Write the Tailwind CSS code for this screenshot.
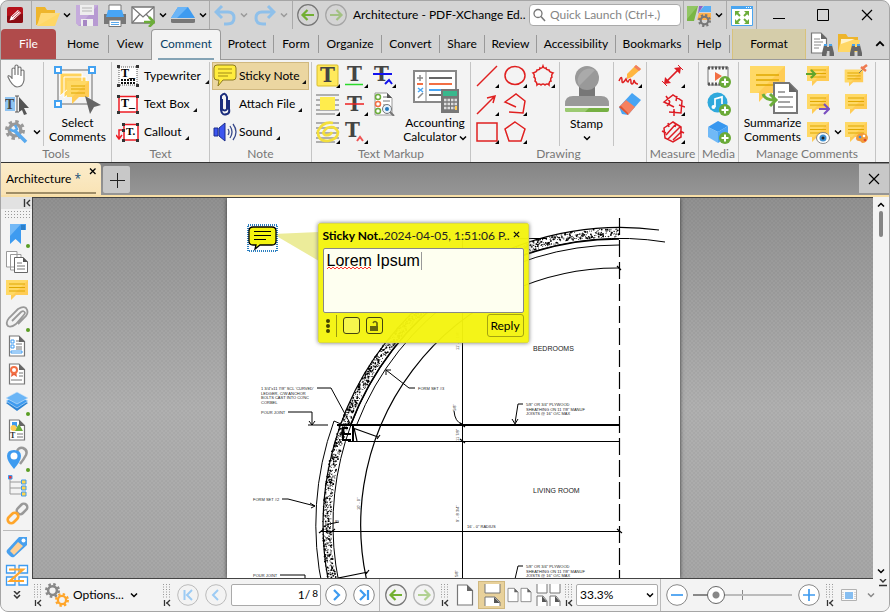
<!DOCTYPE html>
<html lang="en">
<head>
  <meta charset="UTF-8">
  <meta name="viewport" content="width=device-width, initial-scale=1.0">
  <title>Architecture - PDF-XChange Editor</title>
  <script src="https://cdn.jsdelivr.net/npm/@tailwindcss/browser@4"></script>
</head>
<body class="bg-white font-['Lato','Open_Sans',sans-serif] text-xs text-black">

<!-- shared icons -->
<svg class="hidden">
  <symbol id="chev" viewBox="0 0 8 8"><path d="M1 2.500 4 5.500 7 2.500" fill="none" stroke="currentColor" stroke-width="1.500"/></symbol>
  <symbol id="corner" viewBox="0 0 4 4"><path d="M4 0V4H0Z" fill="#111"/></symbol>
  <symbol id="note" viewBox="0 0 24 24"><path d="M1 2H23V17H11L6 22V17H1Z" fill="#fc5"/><path d="M1 2H23L8 17H1Z" fill="#ffd966"/><path d="M4 6H20M4 9.500H20M4 13H20" stroke="#e0a800" stroke-width="1.200"/></symbol>
  <symbol id="page" viewBox="0 0 18 22"><path d="M1.500 1H11L16.500 6.500V21H1.500Z" fill="#fff" stroke="#777" stroke-width="1.200"/><path d="M11 1V7H17Z" fill="#666"/></symbol>
  <symbol id="plus" viewBox="0 0 12 12"><circle cx="6" cy="6" r="6" fill="#6aaa38"/><path d="M6 2.500V9.500M2.500 6H9.500" stroke="#fff" stroke-width="2"/></symbol>
  <symbol id="gear" viewBox="0 0 24 24"><circle cx="12" cy="12" r="7" fill="none" stroke="currentColor" stroke-width="4"/><circle cx="12" cy="12" r="10" fill="none" stroke="currentColor" stroke-width="4" stroke-dasharray="4 3.850"/></symbol>
  <symbol id="grip" viewBox="0 0 9 24"><path d="M.5 1V15M3.500 1V15M6.500 1V15" stroke="#999" stroke-dasharray="1 1.500"/><path d="M1.500 17V23M7 17 4 20 7 23M4 20H3" fill="none" stroke="#333" stroke-width="1.300"/></symbol>
  <symbol id="binoc" viewBox="0 0 12 12"><path d="M2 1H5V3H7V1H10L12 9V12H7.500V7H4.500V12H0V9Z" fill="#666"/><path d="M2 0H5V2H2ZM7 0H10V2H7Z" fill="#4aa3ea"/></symbol>
  <symbol id="arrow" viewBox="0 0 22 22"><circle cx="11" cy="11" r="10.300" fill="none" stroke="#777" stroke-width="1.200"/><path d="M17 11H6M10.500 6 5.500 11 10.500 16" fill="none" stroke="#72b032" stroke-width="2.200"/></symbol>
  <symbol id="poly" viewBox="0 0 24 24"><path d="M12 2 22 9 18 21H6L2 9Z" fill="none" stroke="currentColor" stroke-width="1.500"/></symbol>
</svg>

<div class="flex h-screen min-h-[560px] flex-col overflow-hidden rounded-lg border border-[#a5a5a5] bg-[#d4d4d4]">

  <!-- title bar -->
  <header class="flex h-7 shrink-0 items-center">
    <div class="flex h-full w-[31px] shrink-0 items-center border-r border-[#aaa] pl-1.5">
      <svg class="size-4" viewBox="0 0 16 16"><rect width="16" height="16" rx="2" fill="#b5121b"/><path d="M0 9V14Q0 16 2 16H14Q16 16 16 14V7Z" fill="#8b0d14"/><path d="M2.500 13.500 4 9.500 11 3 14 6 7 12.500Z" fill="#fff"/><path d="M5 10 12 4M6.500 11.500 13 5.500" stroke="#b5121b" stroke-width=".8"/></svg>
    </div>
    <button class="ml-1 shrink-0" aria-label="Open"><svg class="size-6" viewBox="0 0 24 24"><path d="M0 4H9L11 7H19V12H7L1 22H0Z" fill="#eeb52c"/><path d="M5 10H24L19 23H1Z" fill="#ffd766"/><path d="M5 10H24L3 22 1 23Z" fill="#ffe08a" opacity=".5"/></svg></button>
    <button class="ml-[3px] shrink-0" aria-label="Open menu"><svg class="size-2"><use href="#chev"/></svg></button>
    <button class="ml-1 shrink-0" aria-label="Save"><svg class="size-6" viewBox="0 0 24 24"><path d="M1 2H23V23H4L1 20Z" fill="#b79ad2"/><path d="M1 2H23L4 23 1 20Z" fill="#c5abdc"/><path d="M5 2H19V12H5Z" fill="#eee"/><path d="M7 5H17M7 8H17" stroke="#b5b5b5"/><path d="M6 16H18V23H6Z" fill="#eee"/><path d="M8 17H12V23H8Z" fill="#a687c4"/></svg></button>
    <button class="ml-1 shrink-0" aria-label="Print"><svg class="size-6" viewBox="0 0 24 24"><path d="M6 2H18V10H6Z" fill="#fff" stroke="#777"/><path d="M1 11H23V21H1Z" fill="#777"/><path d="M5 7H19L21 14H3Z" fill="#48a5f4"/><path d="M6 17H18V23.500H6Z" fill="#fff" stroke="#777"/><path d="M8 19.500H16M8 21.500H16" stroke="#5aa9ec"/></svg></button>
    <button class="ml-1 shrink-0" aria-label="Email"><svg class="size-6" viewBox="0 0 24 24"><path d="M1 4H23V20H1Z" fill="#fff" stroke="#777" stroke-width="1.300"/><path d="M1 4 12 14 23 4M1 20 9 11M23 20 15 11" fill="none" stroke="#777" stroke-width="1.200"/><path d="M13 19H22M18 14 23 19 18 24" fill="none" stroke="#6cad3a" stroke-width="2.500"/></svg></button>
    <button class="ml-1 shrink-0" aria-label="Email menu"><svg class="size-2"><use href="#chev"/></svg></button>
    <button class="ml-1 shrink-0" aria-label="Scan"><svg class="size-6" viewBox="0 0 24 24"><path d="M7 4H17L24 15H0Z" fill="#3e9bf0"/><path d="M7 4H17L6 15H0Z" fill="#6bb5f7"/><path d="M0 16H24V19Q24 20 22 20H2Q0 20 0 19Z" fill="#777"/></svg></button>
    <button class="ml-1 shrink-0" aria-label="Scan menu"><svg class="size-2"><use href="#chev"/></svg></button>
    <div class="ml-0.5 h-full w-px shrink-0 bg-[#aaa]"></div>
    <button class="ml-1 shrink-0" aria-label="Undo"><svg class="size-6" viewBox="0 0 24 24"><path d="M2 9H14Q20 9 20 15 20 21 13 21H10M8 3 2 9 8 15" fill="none" stroke="#8fc0ea" stroke-width="3"/></svg></button>
    <button class="ml-0.5 shrink-0 text-[#999]" aria-label="Undo menu"><svg class="size-2"><use href="#chev"/></svg></button>
    <button class="ml-1 shrink-0" aria-label="Redo"><svg class="size-6" viewBox="0 0 24 24"><path d="M22 9H10Q4 9 4 15 4 21 11 21H14M16 3 22 9 16 15" fill="none" stroke="#8fc0ea" stroke-width="3"/></svg></button>
    <button class="ml-1 shrink-0 text-[#999]" aria-label="Redo menu"><svg class="size-2"><use href="#chev"/></svg></button>
    <div class="ml-1 h-full w-px shrink-0 bg-[#aaa]"></div>
    <button class="ml-1 shrink-0" aria-label="Back"><svg class="size-[22px]"><use href="#arrow"/></svg></button>
    <button class="ml-1.5 shrink-0 rotate-180 opacity-50" aria-label="Forward"><svg class="size-[22px]"><use href="#arrow"/></svg></button>
    <h1 class="ml-1.5 min-w-0 flex-1 whitespace-nowrap">Architecture - PDF-XChange Ed..</h1>
    <label class="flex h-[22px] w-[152px] shrink-0 items-center gap-1 rounded-sm border border-[#aaa] bg-white px-0.5">
      <svg class="size-3.5 shrink-0" viewBox="0 0 14 14"><circle cx="6" cy="5.500" r="4" fill="none" stroke="#777" stroke-width="1.300"/><path d="M9 8.500 13 13" stroke="#777" stroke-width="1.500"/></svg>
      <input class="w-full min-w-0 placeholder:text-[#858585] focus:outline-none" placeholder="Quick Launch (Ctrl+.)" aria-label="Quick Launch">
    </label>
    <div class="ml-0.5 h-full w-px shrink-0 bg-[#aaa]"></div>
    <button class="ml-[3px] shrink-0" aria-label="UI options"><svg class="size-6" viewBox="0 0 24 24"><path d="M0 3H11L7 18H0Z" fill="#79b644"/><path d="M0 3H11L0 16Z" fill="#92c664"/><path d="M12 3H16L11 11Z" fill="#8d63c9"/><path d="M17 3H24V9H12Z" fill="#58aef5"/><path d="M12 10H24V17H10Z" fill="#ffb14d"/><use href="#gear" x="11" y="11" width="13" height="13" color="#777"/></svg></button>
    <button class="ml-1 shrink-0" aria-label="UI options menu"><svg class="size-2"><use href="#chev"/></svg></button>
    <div class="ml-[3px] h-full w-px shrink-0 bg-[#aaa]"></div>
    <button class="ml-[3px] shrink-0" aria-label="Full screen"><svg class="size-6" viewBox="0 0 24 24"><path d="M1.500 3.500H22.500V22.500H1.500Z" fill="#fff" stroke="#4aa5f0"/><path d="M1 3H23V6H1Z" fill="#4aa5f0"/><path d="M16 4.500H22" stroke="#fff" stroke-dasharray="1 1"/><path d="M5 8H10L5 13ZM19 8H14L19 13ZM5 21H10L5 16ZM19 21H14L19 16Z" fill="#6cad3a"/><path d="M6 9 10 13M18 9 14 13M6 20 10 16M18 20 14 16" stroke="#6cad3a" stroke-width="2"/></svg></button>
    <div class="ml-0.5 h-full w-px shrink-0 bg-[#aaa]"></div>
    <button class="flex w-11 shrink-0 justify-center" aria-label="Minimize"><svg class="size-3" viewBox="0 0 12 12"><path d="M0 9.500H12" stroke="#000"/></svg></button>
    <button class="flex w-11 shrink-0 justify-center" aria-label="Maximize"><svg class="size-3" viewBox="0 0 12 12"><path d="M.5.5H11.500V11.500H.5Z" fill="none" stroke="#000"/></svg></button>
    <button class="flex w-11 shrink-0 justify-center" aria-label="Close"><svg class="size-3" viewBox="0 0 12 12"><path d="M1 1 11 11M11 1 1 11" stroke="#000" stroke-width="1.200"/></svg></button>
  </header>

  <!-- ribbon tabs -->
  <nav class="flex h-[31px] shrink-0 items-stretch border-b border-[#9a9a9a]">
    <a href="#" class="flex w-[55px] items-center justify-center rounded-t bg-[#b04b4b] text-white">File</a>
    <a href="#" class="my-1.5 ml-0.5 flex w-[51px] items-center justify-center border-r border-[#999]">Home</a>
    <a href="#" class="flex w-[42px] items-center justify-center">View</a>
    <a href="#" class="-mb-px flex w-[70px] flex-col items-center justify-end rounded-t border border-b-0 border-[#999] bg-[#f3f3f3] text-[#0b3f66]"><span class="flex flex-1 items-center">Comment</span><span class="h-0.5 w-14 bg-[#84a3b5]"></span></a>
    <a href="#" class="my-1.5 flex w-[53px] items-center justify-center border-r border-[#999]">Protect</a>
    <a href="#" class="my-1.5 flex w-[45px] items-center justify-center border-r border-[#999]">Form</a>
    <a href="#" class="my-1.5 flex w-[63px] items-center justify-center border-r border-[#999]">Organize</a>
    <a href="#" class="my-1.5 flex w-[58px] items-center justify-center border-r border-[#999]">Convert</a>
    <a href="#" class="my-1.5 flex w-[45px] items-center justify-center border-r border-[#999]">Share</a>
    <a href="#" class="my-1.5 flex w-[52px] items-center justify-center border-r border-[#999]">Review</a>
    <a href="#" class="my-1.5 flex w-[79px] items-center justify-center border-r border-[#999]">Accessibility</a>
    <a href="#" class="my-1.5 flex w-[73px] items-center justify-center border-r border-[#999]">Bookmarks</a>
    <a href="#" class="my-1.5 flex w-[41px] items-center justify-center border-r border-[#999]">Help</a>
    <a href="#" class="ml-0.5 flex w-[74px] items-center justify-center border-x border-[#d8c27c] bg-[#d5cdaa]">Format</a>
    <div class="ml-1 flex flex-1 items-center gap-1">
      <button aria-label="Find"><svg class="size-6" viewBox="0 0 24 24"><use href="#page" width="18" height="22"/><path d="M4 7H10M4 10H13M4 13H11M4 16H9" stroke="#888"/><use href="#binoc" x="12" y="12" width="12" height="12"/></svg></button>
      <button aria-label="Search"><svg class="size-6" viewBox="0 0 24 24"><path d="M0 2H8L10 5H20V10L2 20H0Z" fill="#eeb52c"/><path d="M3 8H22L19 20H0Z" fill="#ffd766"/><path d="M3 7H17L3 12Z" fill="#fff3cc"/><use href="#binoc" x="12" y="12" width="12" height="12"/></svg></button>
      <button class="mr-1 ml-auto rotate-180" aria-label="Collapse ribbon"><svg class="size-2.5"><use href="#chev"/></svg></button>
    </div>
  </nav>

  <!-- ribbon -->
  <div class="flex h-[102px] shrink-0 bg-[#f3f3f3] pt-0.5 whitespace-nowrap [&>section]:flex [&>section]:shrink-0 [&>section]:flex-col [&>section]:border-r [&>section]:border-[#c4c4c4] [&>section>h2]:h-4 [&>section>h2]:text-center [&>section>h2]:leading-4 [&>section>h2]:text-[#777] [&>section>div]:flex [&>section>div]:h-[84px]">
    <section class="w-[111px]">
      <div>
        <div class="grid w-[43px] shrink-0 grid-rows-3 items-center border-r border-[#c4c4c4] pl-1">
          <button aria-label="Hand"><svg class="size-6" viewBox="0 0 24 24"><path d="M7 15V5Q8.500 3 10 5V2Q11.500 0 13 2V4Q15 2 16 4V7Q18 5 19 7V16Q18 23 12 23 7 22 3 13 3 10 7 14M10 5V11M13 4V11M16 6V12" fill="#fff" stroke="#777" stroke-width="1.200"/></svg></button>
          <button aria-label="Select text"><svg class="size-6" viewBox="0 0 24 24"><path d="M0 5H10V19H0Z" fill="#8fc4f2"/><text x="0" y="17" font-family="Liberation Serif" font-weight="bold" font-size="14" fill="#444">T</text><path d="M10 4H14M12 4V20M10 20H14" stroke="#555"/><path d="M14 5 24 16 19 16 22 22 19 23 17 18 14 20Z" fill="#555"/></svg></button>
          <div class="flex items-center gap-1"><button class="shrink-0" aria-label="Other tools"><svg class="size-6" viewBox="0 0 24 24"><use href="#gear" width="20" height="20" color="#999"/><path d="M9 10 21 22" stroke="#58a9ee" stroke-width="3.500"/><path d="M5 9Q9 13 12 9L10 5" fill="none" stroke="#58a9ee" stroke-width="2.500"/></svg></button><svg class="size-2 shrink-0"><use href="#chev"/></svg></div>
        </div>
        <button class="flex flex-1 flex-col items-center leading-[14px]">
          <svg class="mt-0.5 size-[52px] shrink-0" viewBox="0 0 52 52"><path d="M6 6H40V40H6Z" fill="none" stroke="#999" stroke-width="1.500"/><path d="M8 9H30V25H16L8 32ZM12 13H34V29H18L12 34Z" fill="#ffd35c" stroke="#fff"/><path d="M15 17H37V33H27L20 40V33H15Z" fill="#fc5"/><path d="M15 17H37L20 33H15Z" fill="#ffd966"/><path d="M19 22H33M19 25H33M19 29H33" stroke="#e0a800" stroke-width="1.200"/><path d="M3 3H9V9H3ZM37 3H43V9H37ZM3 37H9V43H3Z" fill="#fff" stroke="#43a2f1" stroke-width="2"/><path d="M33 32 49 41 42 43 38 50Z" fill="#666"/></svg>
          <span>Select<br>Comments</span>
        </button>
      </div>
      <h2>Tools</h2>
    </section>

    <section class="w-[98px]">
      <div class="flex-col pl-1">
        <button class="flex h-7 w-[88px] items-center gap-1 text-left"><svg class="size-6 shrink-0" viewBox="0 0 24 24"><path d="M3 3H21V21H3Z" fill="#fff" stroke="#555" stroke-dasharray="1 1"/><text x="5" y="13" font-family="Liberation Serif" font-weight="bold" font-size="12">T_</text><path d="M5 16H19M5 19H19" stroke="#111" stroke-width="2" stroke-dasharray="2 1"/><path d="M1 1H4V4H1ZM20 1H23V4H20ZM1 20H4V23H1ZM20 20H23V23H20Z" fill="#333"/></svg><span class="flex-1">Typewriter</span><svg class="mt-3 size-1 shrink-0"><use href="#corner"/></svg></button>
        <button class="flex h-7 w-[78px] items-center gap-1 text-left"><svg class="size-6 shrink-0" viewBox="0 0 24 24"><path d="M3 4.500H21V20H3Z" fill="#fff" stroke="#ee1c24" stroke-width="1.500"/><text x="5" y="15" font-family="Liberation Serif" font-weight="bold" font-size="12">T_</text><path d="M1 3H4V6H1ZM20 3H23V6H20ZM1 19H4V22H1ZM20 19H23V22H20Z" fill="#333"/></svg><span class="flex-1">Text Box</span><svg class="mt-3 size-1 shrink-0"><use href="#corner"/></svg></button>
        <button class="flex h-7 w-[72px] items-center gap-1 text-left"><svg class="size-6 shrink-0" viewBox="0 0 24 24"><path d="M8 4.500H22V20H8Z" fill="#fff" stroke="#ee1c24" stroke-width="1.500"/><path d="M8 10H3V18M0 15 3 19 6 15" fill="none" stroke="#ee1c24" stroke-width="1.500"/><text x="10" y="15" font-family="Liberation Serif" font-weight="bold" font-size="11">T.</text><path d="M6 3H9V6H6ZM20 3H23V6H20ZM6 19H9V22H6ZM20 19H23V22H20ZM6 9H9V12H6Z" fill="#333"/></svg><span class="flex-1">Callout</span><svg class="mt-3 size-1 shrink-0"><use href="#corner"/></svg></button>
      </div>
      <h2>Text</h2>
    </section>

    <section class="w-[102px]">
      <div class="flex-col pl-0.5">
        <button class="flex h-7 w-[97px] items-center gap-0.5 border border-[#d0b87f] bg-[#ebd6a1] pr-0.5 text-left"><svg class="size-6 shrink-0" viewBox="0 0 24 24"><path d="M4 1H20Q23 1 23 4V13Q23 16 20 16H10L5 22 6 16H4Q1 16 1 13V4Q1 1 4 1Z" fill="#ffec3d" stroke="#8c7a20"/><path d="M5 5H19M5 9H19M5 12H15" stroke="#a18b19"/></svg><span class="flex-1">Sticky Note</span><svg class="mt-3 size-1 shrink-0"><use href="#corner"/></svg></button>
        <button class="flex h-7 w-[90px] items-center gap-0.5 pl-px text-left"><svg class="size-6 shrink-0" viewBox="0 0 24 24"><path d="M9 7V17Q12 20 14 17V5Q12-1 8 4V18Q9 24 14 22 17 21 16 17V8" fill="none" stroke="#1b2d7c" stroke-width="2"/></svg><span class="flex-1">Attach File</span><svg class="mt-3 size-1 shrink-0"><use href="#corner"/></svg></button>
        <button class="flex h-7 w-[68px] items-center gap-0.5 pl-px text-left"><svg class="size-6 shrink-0" viewBox="0 0 24 24"><path d="M1 8H5V16H1ZM6 8 12 3V21L6 16Z" fill="#3c55f0" stroke="#1b2d8c"/><path d="M15 9Q17 12 15 15M17 6Q21 12 17 18M20 4Q26 12 20 20" fill="none" stroke="#394a8c" stroke-width="1.300"/></svg><span class="flex-1">Sound</span><svg class="mt-3 size-1 shrink-0"><use href="#corner"/></svg></button>
      </div>
      <h2>Note</h2>
    </section>

    <section class="w-[159px]">
      <div class="pl-1">
        <div class="grid shrink-0 grid-cols-[28px_28px_28px] grid-rows-3 items-center" font-family="DejaVu Serif">
          <button aria-label="Highlight text"><svg class="size-6" viewBox="0 0 24 24"><rect x="1" y="1" width="21" height="21" rx="1" fill="#ffe95c" stroke="#d9bd2b"/><text x="4" y="18" font-family="DejaVu Serif" font-weight="bold" font-size="20" fill="#444">T</text><path d="M24 20V24H20Z"/></svg></button>
          <button aria-label="Underline text"><svg class="size-6" viewBox="0 0 24 24"><text x="3" y="17" font-family="DejaVu Serif" font-weight="bold" font-size="20" fill="#444">T</text><path d="M1 20.500H19" stroke="#2bd92b" stroke-width="1.500"/><path d="M24 20V24H20Z"/></svg></button>
          <button aria-label="Replace text"><svg class="size-6" viewBox="0 0 24 24"><text x="2" y="17" font-family="DejaVu Serif" font-weight="bold" font-size="20" fill="#444">T</text><path d="M1 10H20M13 20 17 16 20 20" fill="none" stroke="#1212ee" stroke-width="2"/><path d="M24 20V24H20Z"/></svg></button>
          <button aria-label="Highlight area"><svg class="size-6" viewBox="0 0 24 24"><path d="M0 3H23M0 8H23M0 13H23M0 18H23M0 22H19" stroke="#999" stroke-width="1.500"/><path d="M4 5H19V18H4Z" fill="#ffec4d"/><path d="M24 20V24H20Z"/></svg></button>
          <button aria-label="Strikeout text"><svg class="size-6" viewBox="0 0 24 24"><text x="3" y="19" font-family="DejaVu Serif" font-weight="bold" font-size="20" fill="#444">T</text><path d="M1 12H20" stroke="#e22" stroke-width="1.500"/><path d="M24 20V24H20Z"/></svg></button>
          <button aria-label="Find markups"><svg class="size-6" viewBox="0 0 24 24"><path d="M3 1H15L20 6V23H3Z" fill="#fff" stroke="#999"/><path d="M15 1V6H20Z" fill="#555"/><circle cx="6" cy="5" r="2.500" fill="none" stroke="#6cad3a" stroke-width="1.500"/><circle cx="6" cy="12" r="2.500" fill="none" stroke="#f26f44" stroke-width="1.500"/><circle cx="6" cy="19" r="2.500" fill="none" stroke="#6cad3a" stroke-width="1.500"/><path d="M11 5H15M11 9H18M11 13H14" stroke="#777"/><circle cx="15" cy="17" r="4.500" fill="#e7f3fd" stroke="#777"/><circle cx="15" cy="17" r="2" fill="#2779bb"/><path d="M18 20 22 24" stroke="#777" stroke-width="2"/></svg></button>
          <button aria-label="Freehand highlight"><svg class="size-6" viewBox="0 0 24 24"><path d="M0 3H23M0 8H23M0 13H23M0 18H23M0 22H19" stroke="#999" stroke-width="1.500"/><path d="M17 3Q7 1 2 11 1 21 12 21 22 19 22 12 19 5 11 8 5 13 9 15 14 16 16 12" fill="none" stroke="#f3df3c" stroke-width="2.700"/><path d="M24 20V24H20Z"/></svg></button>
          <button aria-label="Insert text"><svg class="size-6" viewBox="0 0 24 24"><text x="1" y="17" font-family="DejaVu Serif" font-weight="bold" font-size="20" fill="#444">T</text><path d="M13 21 16 17 19 21" fill="none" stroke="#ee5555" stroke-width="2"/><path d="M24 20V24H20Z"/></svg></button>
        </div>
        <button class="flex flex-1 flex-col items-center leading-[14px]">
          <svg class="mt-0.5 size-[52px] shrink-0" viewBox="0 0 52 52"><path d="M5 7H47V38H5Z" fill="#fff" stroke="#888" stroke-width="2"/><path d="M17 8V37" stroke="#888"/><path d="M20 14H43M20 31H32" stroke="#666" stroke-width="2"/><path d="M20 20H43" stroke="#f26f44" stroke-width="2"/><path d="M20 26H36" stroke="#48a5f4" stroke-width="2"/><path d="M8 14H14M11 11V17M9 34 14 29" stroke="#888" stroke-width="1.500"/><path d="M8 20H14" stroke="#f26f44" stroke-width="2"/><path d="M9 24 14 28M14 24 9 28" stroke="#48a5f4" stroke-width="1.500"/><path d="M32 25H50V49H32Z" fill="#777"/><path d="M34 27H48V32H34Z" fill="#38b88d"/><path d="M35 36H48M35 40H48M35 44H48" stroke="#ddd" stroke-width="2.500" stroke-dasharray="2.500 1"/><path d="M46 42H48V46H46Z" fill="#fc5"/></svg>
          <span>Accounting<br>Calculator<svg class="ml-0.5 inline size-2"><use href="#chev"/></svg></span>
        </button>
      </div>
      <h2>Text Markup</h2>
    </section>

    <section class="w-[176px]">
      <div class="pl-1 text-[#e02020]">
        <div class="grid shrink-0 grid-cols-[28px_28px_28px] grid-rows-3 items-center border-r border-[#c4c4c4]">
          <button aria-label="Line"><svg class="size-6" viewBox="0 0 24 24"><path d="M2 22 22 2" stroke="currentColor" stroke-width="1.500"/><path d="M24 20V24H20Z"/></svg></button>
          <button aria-label="Oval"><svg class="size-6" viewBox="0 0 24 24"><ellipse cx="12" cy="11.500" rx="10" ry="9" fill="none" stroke="currentColor" stroke-width="1.500"/><path d="M24 20V24H20Z"/></svg></button>
          <button aria-label="Cloud"><svg class="size-6" viewBox="0 0 24 24"><path d="M12 2Q13 5 15 4 15 6 18 6 18 8 22 9 20 11 21 13 19 14 20 17 18 17 18 21 16 19 14 21 12 19 10 21 8 19 6 21 6 18 4 17 5 14 3 13 4 11 2 9 6 8 6 6 9 6 9 4 11 5 12 2Z" fill="none" stroke="currentColor" stroke-width="1.500"/><path d="M24 20V24H20Z"/></svg></button>
          <button aria-label="Arrow"><svg class="size-6" viewBox="0 0 24 24"><path d="M2 22 20 4M12 6 20 4 18 11" fill="none" stroke="currentColor" stroke-width="1.500"/><path d="M24 20V24H20Z"/></svg></button>
          <button aria-label="Polyline"><svg class="size-6" viewBox="0 0 24 24"><path d="M13 15 2 10 13 2 22 9 20 21 6 20" fill="none" stroke="currentColor" stroke-width="1.500"/><path d="M24 20V24H20Z"/></svg></button>
          <span></span>
          <button aria-label="Rectangle"><svg class="size-6" viewBox="0 0 24 24"><path d="M2 3H22V21H2Z" fill="none" stroke="currentColor" stroke-width="1.500"/><path d="M24 20V24H20Z"/></svg></button>
          <button aria-label="Polygon"><svg class="size-6" viewBox="0 0 24 24"><use href="#poly"/><path d="M24 20V24H20Z"/></svg></button>
        </div>
        <button class="flex w-[54px] shrink-0 flex-col items-center border-r border-[#c4c4c4] text-black">
          <svg class="mt-0.5 h-[50px] w-11 shrink-0" viewBox="0 0 44 50"><path d="M14 20H30V34H14Z" fill="#777"/><circle cx="22" cy="14" r="12" fill="#999"/><path d="M14 22A12 12 0 0 1 30 6Z" fill="#aaa"/><path d="M0 40Q0 32 8 32H36Q44 32 44 40V42H0Z" fill="#999"/><path d="M0 44H44V46Q44 48 42 48H2Q0 48 0 46Z" fill="#76b043"/><path d="M0 44H24L20 48H2Q0 48 0 46Z" fill="#9cca72"/></svg>
          <span class="leading-[20px]">Stamp</span><svg class="size-2"><use href="#chev"/></svg>
        </button>
        <div class="flex flex-col gap-1 pt-0.5 pl-1">
          <button aria-label="Pencil"><svg class="size-6" viewBox="0 0 24 24"><path d="M1 17Q4 10 4 17 4 21 8 15 9 18 10 18 13 12 13 19 15 22 16 16 17 20 20 20" fill="none" stroke="currentColor" stroke-width="1.500"/><path d="M9 10 18 1 23 5 14 13 9 15Z" fill="#ffb640"/><path d="M18 1 23 5 21 7 16 3Z" fill="#f07d62"/><path d="M24 20V24H20Z"/></svg></button>
          <button aria-label="Eraser"><svg class="size-6" viewBox="0 0 24 24"><path d="M1 15 14 1 23 8 10 23 4 22Z" fill="#48a5f4"/><path d="M1 15 8 8 17 15 10 23Z" fill="#f6805f"/><path d="M1 15 10 23V21L3 14Z" fill="#d95333"/></svg></button>
        </div>
      </div>
      <h2>Drawing</h2>
    </section>

    <section class="w-[52px]">
      <div class="flex-col items-center justify-around text-[#dd1c24]">
        <button aria-label="Distance"><svg class="size-6" viewBox="0 0 24 24"><path d="M5 18 18 5" stroke="currentColor" stroke-width="1.700"/><path d="M3 20 4 13 10 19ZM20 3 19 10 13 4Z" fill="currentColor"/><path d="M1 17 6 22M17 1 22 6" stroke="currentColor"/><path d="M24 20V24H20Z"/></svg></button>
        <button aria-label="Perimeter"><svg class="size-6" viewBox="0 0 24 24"><path d="M13 15 3 10 12 3 21 9 20 21 8 20M5 4 9 10M16 4 15 9M18 13 24 15M13 17V24M9 10 6 14" fill="none" stroke="currentColor" stroke-width="1.500"/><path d="M24 20V24H20Z"/></svg></button>
        <button aria-label="Area"><svg class="size-6" viewBox="0 0 24 24"><path d="M12 2 20 7V17L12 22 4 18 3 8ZM5 15 14 5M7 19 19 7M12 20 20 12M7 3 8 7M1 11 5 13M15 3 14 7M19 11 23 13" fill="none" stroke="currentColor" stroke-width="1.500"/><path d="M24 20V24H20Z"/></svg></button>
      </div>
      <h2>Measure</h2>
    </section>

    <section class="w-10">
      <div class="flex-col items-center justify-around">
        <button aria-label="Video"><svg class="size-6" viewBox="0 0 24 24"><path d="M1 3H21V21H1Z" fill="#f8f8f8" stroke="#777"/><path d="M1 4H21M1 20H21" stroke="#555" stroke-width="3" stroke-dasharray="2 1.500"/><path d="M8 8 15 12 8 17Z" fill="#f26f44"/><use href="#plus" x="12" y="12" width="12" height="12"/></svg></button>
        <button aria-label="Audio"><svg class="size-6" viewBox="0 0 24 24"><circle cx="10.500" cy="10.500" r="10" fill="#2fa9dc"/><path d="M8 15V7L15 5V12" fill="none" stroke="#fff" stroke-width="1.700"/><circle cx="6.500" cy="15" r="2" fill="#fff"/><use href="#plus" x="12" y="12" width="12" height="12"/></svg></button>
        <button aria-label="3D"><svg class="size-6" viewBox="0 0 24 24"><path d="M11 1 21 6 11 12 1 7Z" fill="#3797ef"/><path d="M1 7 11 12V23L1 17Z" fill="#70b9f7"/><path d="M21 6V17L11 23V12Z" fill="#4aa4f3"/><use href="#plus" x="12" y="12" width="12" height="12"/></svg></button>
      </div>
      <h2>Media</h2>
    </section>

    <section class="w-[137px]">
      <div>
        <button class="flex w-[67px] shrink-0 flex-col items-center leading-[14px]">
          <svg class="mt-0.5 size-[52px] shrink-0" viewBox="0 0 52 52"><path d="M3 2H38V29H20L12 38V29H3Z" fill="#fc5"/><path d="M3 2H38L11 29H3Z" fill="#ffd966"/><path d="M9 11H32M9 16H32M9 21H32" stroke="#e0a800" stroke-width="1.500"/><path d="M27 19H42L50 27V49H27Z" fill="#fff" stroke="#777" stroke-width="2"/><path d="M42 19V28H50Z" fill="#666"/><path d="M31 28H38M31 33H46M31 38H43M31 43H46" stroke="#888" stroke-width="1.500"/><path d="M16 30Q18 36 27 36M23 30 29 36 23 42" fill="none" stroke="#6cad3a" stroke-width="3"/></svg>
          <span>Summarize<br>Comments</span>
        </button>
        <div class="grid w-[38px] shrink-0 grid-rows-3 items-center">
          <button aria-label="Import comments"><svg class="size-6" viewBox="0 0 24 24"><use href="#note"/><path d="M0 10H9M5 6 9 10 5 14" fill="none" stroke="#5fa52c" stroke-width="2.200"/></svg></button>
          <button aria-label="Export comments"><svg class="size-6" viewBox="0 0 24 24"><use href="#note"/><path d="M13 17H23M18 12 23 17 18 22" fill="none" stroke="#7a4fc0" stroke-width="2.200"/></svg></button>
          <div class="flex items-center gap-1"><button class="shrink-0" aria-label="Show comments"><svg class="size-6" viewBox="0 0 24 24"><use href="#note"/><ellipse cx="17" cy="18" rx="6.500" ry="5.500" fill="#fff" stroke="#888"/><circle cx="17" cy="18" r="3.500" fill="#3d8fd0"/><circle cx="17" cy="18" r="1.500" fill="#222"/></svg></button><svg class="size-2 shrink-0"><use href="#chev"/></svg></div>
        </div>
        <div class="grid flex-1 grid-rows-3 items-center">
          <button aria-label="Keep tool selected"><svg class="size-6" viewBox="0 0 24 24"><use href="#note" y="4" width="20" height="20"/><path d="M15 9 20 4" stroke="#777"/><path d="M17 3 22 7M19 4 23 1" stroke="#ef7a50" stroke-width="2.500"/></svg></button>
          <button aria-label="Comments list"><svg class="size-6"><use href="#note"/></svg></button>
          <button aria-label="Comment styles"><svg class="size-6" viewBox="0 0 24 24"><use href="#note"/><path d="M12 18Q13 13 19 13 24 14 24 18 23 23 18 23 17 21 15 21 12 21 12 18Z" fill="#f29b3b"/><circle cx="16" cy="17" r="1.300" fill="#3b8fe0"/><circle cx="20" cy="16" r="1.300" fill="#fff"/><circle cx="21" cy="20" r="1.300" fill="#d43"/></svg></button>
        </div>
      </div>
      <h2>Manage Comments</h2>
    </section>
  </div>

  <!-- document tabs -->
  <div class="flex h-[35px] shrink-0 items-start border-t border-b-2 border-t-[#333] border-b-[#f8dfa6] bg-linear-to-b from-[#858585] to-[#969696]">
    <div class="relative flex h-full w-[100px] flex-col justify-between rounded-tr bg-linear-to-b from-[#fbeccb] to-[#f9e3b4] px-[5px] pb-px">
      <span class="pt-2 leading-4 whitespace-nowrap">Architecture <span class="font-['Open_Sans'] text-[#13507a]">*</span></span>
      <span class="h-0.5 bg-[#a08e67]"></span>
      <button class="absolute top-1 right-1" aria-label="Close tab"><svg class="size-2" viewBox="0 0 8 8"><path d="M1 1.500 6.500 7M6.500 1.500 1 7" stroke="#000" stroke-width="1.300"/></svg></button>
    </div>
    <button class="mt-[3px] ml-0.5 flex size-[27px] items-center justify-center rounded-xs bg-[#c8c8c8]" aria-label="New tab"><svg class="size-4" viewBox="0 0 16 16"><path d="M8.500 1V16M1 8.500H16" stroke="#222"/></svg></button>
    <button class="mt-px ml-auto flex h-[29px] w-[30px] items-center justify-center bg-[#c8c8c8]" aria-label="Close document"><svg class="size-3" viewBox="0 0 12 12"><path d="M1 1 11 11M11 1 1 11" stroke="#000" stroke-width="1.200"/></svg></button>
  </div>

  <div class="flex min-h-0 flex-1">
    <!-- side panes -->
    <aside class="flex w-[31px] shrink-0 flex-col items-center overflow-hidden bg-[#f3f3f3] [&>button]:relative [&>button]:flex [&>button]:h-7 [&>button]:w-full [&>button]:shrink-0 [&>button]:items-center [&>button]:justify-center">
      <div class="flex h-3 w-full shrink-0 items-center justify-end bg-[#e2e2e2] pr-px"><svg class="size-2" viewBox="0 0 8 8"><path d="M1.500 0V8M7 1 4 4 7 7" fill="none" stroke="#333" stroke-width="1.400"/></svg></div>
      <div class="mt-px h-2.5 w-[26px] shrink-0 bg-[radial-gradient(#999_1px,transparent_1px)] bg-[size:3px_3px]"></div>
      <button aria-label="Bookmarks"><svg class="size-6" viewBox="0 0 24 24"><path d="M5 2H21V8H16V22L10.500 17 5 22Z" fill="#3e9bf0"/><path d="M5 2H16L5 14Z" fill="#74b9f6"/><path d="M16 3H20V8H16Z" fill="#2c7fc9"/></svg><i class="absolute right-0.5 bottom-0 size-1 rounded-full bg-[#5a9e24]"></i></button>
      <button aria-label="Thumbnails"><svg class="size-6" viewBox="0 0 24 24"><path d="M1.500 1.500H12V17H1.500ZM5.500 4.500H16V20H5.500Z" fill="#fff" stroke="#999"/><path d="M9.500 7.500H18L22.500 12V22.500H9.500Z" fill="#fff" stroke="#666"/><path d="M18 7V12H23Z" fill="#555"/><path d="M12 13H17M12 16H20M12 19H20" stroke="#777"/></svg></button>
      <button aria-label="Comments"><svg class="size-6"><use href="#note"/></svg></button>
      <button aria-label="Attachments"><svg class="size-6" viewBox="0 0 24 24"><path d="M7 15 16 6Q19 4 20 7 20 8 11 18 6 22 3 20 0 17 4 12L13 3Q18 0 21 2 24 6 21 10L13 18" fill="none" stroke="#999" stroke-width="1.800"/></svg><i class="absolute right-0.5 bottom-0 size-1 rounded-full bg-[#5a9e24]"></i></button>
      <button aria-label="Fields"><svg class="size-[22px]" viewBox="0 0 22 22"><use href="#page" x="2" width="18" height="22"/><path d="M5 5H8V8H5ZM5 10H8V13H5ZM5 16H16V18H5Z" fill="none" stroke="#3e9bf0"/><path d="M10 6H13M10 9H16M10 12H16M10 14H16" stroke="#777"/></svg></button>
      <button aria-label="Signatures"><svg class="size-[22px]" viewBox="0 0 22 22"><use href="#page" x="2" width="18" height="22"/><path d="M6 8 5 14 8 12 11 14 10 8Z" fill="#e9603a"/><circle cx="8" cy="7" r="3" fill="#fff" stroke="#f26f44" stroke-width="2"/><path d="M13 10H17M13 13H17M5 17H16" stroke="#777"/></svg></button>
      <button aria-label="Layers"><svg class="size-6" viewBox="0 0 24 24"><path d="M1 13 12 7 23 13 12 21Z" fill="#2b83d4"/><path d="M1 11 12 5 23 11 12 18Z" fill="#3e9bf0" stroke="#cfe6fa" stroke-width=".6"/><path d="M1 8 12 2 23 8 12 14Z" fill="#6ab5f6" stroke="#cfe6fa" stroke-width=".6"/></svg><i class="absolute right-0.5 bottom-0 size-1 rounded-full bg-[#5a9e24]"></i></button>
      <button aria-label="Content"><svg class="size-[22px]" viewBox="0 0 22 22"><use href="#page" x="2" width="18" height="22"/><path d="M6 3H11V8H6Z" fill="#3e9bf0"/><path d="M8 12 13 5 17 12Z" fill="#6cad3a"/><circle cx="7.500" cy="9" r="3" fill="#fc5"/><text x="4" y="19" font-family="Liberation Serif" font-weight="bold" font-size="8" fill="#333">T</text><path d="M11 15H17M11 18H17" stroke="#777"/></svg></button>
      <button aria-label="Destinations"><svg class="size-6" viewBox="0 0 24 24"><path d="M12 5Q14 1 18 2 23 4 21 9 19 13 15 18" fill="none" stroke="#999" stroke-width="2.500"/><path d="M9 23Q2 15 2 10 2 4 9 4 16 4 16 10 16 15 9 23Z" fill="#3e9bf0"/><circle cx="9" cy="10" r="3.500" fill="#fff"/></svg><i class="absolute right-0.5 bottom-0 size-1 rounded-full bg-[#5a9e24]"></i></button>
      <button aria-label="Structure"><svg class="size-6" viewBox="0 0 24 24"><path d="M5 4V20H17M5 8H17M5 14H17" fill="none" stroke="#999"/><path d="M3.500 1.500H7V5H3.500Z" fill="#e33" stroke="#3e9bf0"/><path d="M16.500 6H21V10H16.500ZM16.500 12H21V16H16.500ZM16.500 18H21V22H16.500Z" fill="#ffd54d" stroke="#3e9bf0"/></svg></button>
      <button aria-label="Links"><svg class="size-6" viewBox="0 0 24 24"><rect x="-6" y="-3.500" width="12" height="7" rx="3.500" transform="translate(17 7) rotate(-45)" fill="none" stroke="#999" stroke-width="2.500"/><rect x="-6" y="-3.500" width="12" height="7" rx="3.500" transform="translate(8 16) rotate(-45)" fill="none" stroke="#ffa62b" stroke-width="2.700"/></svg></button>
      <hr class="my-0.5 w-[27px] shrink-0 border-[#bbb]">
      <button aria-label="Tags"><svg class="size-6" viewBox="0 0 24 24"><path d="M2 15 14 2H22V10L9 22Q7 23 5 21L2 18Q1 16 2 15Z" fill="#48a0ee"/><path d="M5 16 13 7 18 11 9 20Z" fill="#ffd094"/><circle cx="18.500" cy="5.500" r="2" fill="#fff"/></svg></button>
      <button aria-label="Reading order"><svg class="size-6" viewBox="0 0 24 24"><path d="M1.500 2.500H10V10H1.500ZM14 2.500H22.500V10H14ZM1.500 14H10V22H1.500ZM14 14H22.500V22H14Z" fill="#fff" stroke="#3e9bf0" stroke-width="1.300"/><path d="M4 6.500H18L5 18H19" fill="none" stroke="#ffa62b" stroke-width="2.200"/></svg></button>
      <svg class="mt-0.5 size-2 shrink-0" viewBox="0 0 8 8"><path d="M1 0 4 3 7 0M1 4 4 7 7 4" fill="none" stroke="#333" stroke-width="1.500"/></svg>
    </aside>

    <div class="flex min-w-0 flex-1 flex-col">
      <div class="flex min-h-0 flex-1">
        <!-- document view -->
        <main class="flex flex-1 justify-center overflow-hidden border-t border-b border-l border-[#444] bg-[repeating-conic-gradient(#00000009_0_25%,transparent_0_50%),linear-gradient(#919191,#b0b0b0_55%,#a7a7a7)] bg-[size:4px_4px,100%_100%]">
          <div class="relative h-full w-[453px] bg-white shadow-[0_0_4px_#333]">
            <svg id="plan" class="h-full w-full" viewBox="226 198 453 380" preserveAspectRatio="xMidYMin slice" font-family="Liberation Sans" font-size="4" fill="none" stroke="#000">
              <!-- wall and dimension arcs, centre 618,525 -->
              <g id="stipple" fill="#000" stroke="none"></g>
              <path d="M331 597A297.500 297.500 0 0 1 658 230" stroke-width="1.200"/>
              <path d="M342 600A286.500 286.500 0 0 1 664 242"/>
              <path d="M350 424A286 286 0 0 1 618 239" stroke-width="1.700"/>
              <path d="M356 424A280 280 0 0 1 618 245"/>
              <path d="M322 590A303 303 0 0 1 333 421L340 424"/>
              <path d="M370 597A257 257 0 0 1 618 268" stroke-width="1.200"/>
              <path d="M618.500 218V579" stroke-width="1.200" stroke-dasharray="17 5"/>
              <path d="M461.500 238V579M461 238.500H546M347 441.500H618M320 531.500H618"/>
              <path d="M336 425H618" stroke-width="2"/>
              <path d="M352 425V441M347 428H342V440H350M342 434H350" stroke-width="2"/>
              <path d="M352 428 377 437M356 441 353 428M337 578 367 572M376 439 379 435M365 574 368 570M459 423 464 427M459 439 464 443M616 529 621 533M318 533 323 529M329 533 334 529M616 266 620 270" stroke-width="1.200"/>
              <path d="M316 388H330L350 425M287 412H311V425M307 425H327M308 421 311 425 314 421M414 388H408L385 370M385 375V370H390M522 404H517L514 423M511 419 514 424 517 419M522 566H517L514 579M281 499H287L314 506M309 503 314 506 310 508M279 575H304V580M453 411Q454 422 461 424M338 522 328 524"/>
              <g fill="#222" stroke="none">
                <text x="532" y="351" font-size="7">BEDROOMS</text>
                <text x="532" y="493" font-size="7">LIVING ROOM</text>
                <text x="260" y="390">1 3/4"x11 7/8" SCL 'CURVED'</text>
                <text x="260" y="395">LEDGER, C/W ANCHOR</text>
                <text x="260" y="399">BOLTS CAST INTO CONC</text>
                <text x="260" y="404">CORBEL</text>
                <text x="260" y="414">POUR JOINT</text>
                <text x="252" y="501">FORM SET #2</text>
                <text x="252" y="577">POUR JOINT</text>
                <text x="417" y="390">FORM SET #3</text>
                <text x="525" y="406">5/8" OR 3/4" PLYWOOD</text>
                <text x="525" y="411">SHEATHING ON 11 7/8" MANUF</text>
                <text x="525" y="415">JOISTS @ 16" O/C MAX</text>
                <text x="525" y="568">5/8" OR 3/4" PLYWOOD</text>
                <text x="525" y="573">SHEATHING ON 11 7/8" MANUF</text>
                <text x="525" y="577">JOISTS @ 16" O/C MAX</text>
                <text x="466" y="528">16' - 0"  RADIUS</text>
                <text x="334" y="523">8"</text>
                <text transform="translate(359 510) rotate(-90)">10' - 0"</text>
                <text transform="translate(458 522) rotate(-90)">9' - 8 3/4"</text>
                <text transform="translate(458 441) rotate(-90)">11 7/8"</text>
                <text transform="translate(455 411) rotate(-90)">5/8"</text>
                <text transform="translate(458 350) rotate(-90)">11' - 1 1/8"</text>
                <text transform="translate(457 577) rotate(-90)">5/8"</text>
              </g>
              <!-- selected note marker -->
              <path d="M272 234 318 232V261Z" fill="#ecec9a" stroke="none"/>
              <path d="M247 225H276V251H247Z" stroke="#2b7fc0" stroke-width="2" stroke-dasharray="1 1" fill="#fff"/>
              <path d="M252 227H271Q275 227 275 231V241Q275 245 271 245H259L254 249 255 245H252Q248 245 248 241V231Q248 227 252 227Z" fill="#f4f40f" stroke-width="1.300"/>
              <path d="M253 231.500H270M253 235.500H270M253 239.500H265" stroke-width="1.200"/>
            </svg>

            <!-- note popup -->
            <div class="absolute top-[25px] left-[91px] flex h-[120px] w-[211px] flex-col rounded-xs border border-[#dcdc3a] bg-[#f4f40f]/96 px-1 pb-1 shadow-[0_0_4px_#777]">
              <div class="flex h-6 shrink-0 items-center whitespace-nowrap">
                <b class="font-bold">Sticky Not..</b><span class="flex-1 text-[#222]">2024-04-05, 1:51:06 P..</span>
                <button class="mr-1 mb-1" aria-label="Close note"><svg class="size-[7px]" viewBox="0 0 8 8"><path d="M1 1 7 7M7 1 1 7" stroke="#111" stroke-width="1.500"/></svg></button>
              </div>
              <div class="relative h-[65px] shrink-0">
                <textarea class="block size-full resize-none rounded-xs border border-[#888] bg-[#fefff0] px-[3px] pt-0.5 font-['Liberation_Sans'] text-base leading-5 text-black focus:outline-none" aria-label="Note text" spellcheck="false">Lorem Ipsum</textarea>
                <svg class="absolute top-[19px] left-1 h-[3px] w-[45px]" viewBox="0 0 45 3"><path d="M0 2 2 0 4 2 6 0 8 2 10 0 12 2 14 0 16 2 18 0 20 2 22 0 24 2 26 0 28 2 30 0 32 2 34 0 36 2 38 0 40 2 42 0 44 2" fill="none" stroke="#f33"/></svg>
                <i class="absolute top-1 left-[98px] h-[18px] w-px bg-[#999]"></i>
              </div>
              <div class="flex flex-1 items-center gap-1.5">
                <button class="flex w-3.5 items-center border-r border-[#999910] py-1 pl-[3px]" aria-label="More"><svg class="h-3.5 w-1" viewBox="0 0 4 14"><circle cx="2" cy="2" r="2" fill="#444400"/><circle cx="2" cy="7" r="2" fill="#444400"/><circle cx="2" cy="12" r="2" fill="#444400"/></svg></button>
                <input type="checkbox" class="size-[17px] appearance-none rounded-[3px] border border-[#44440f] bg-[#f6f64c]" aria-label="Mark note">
                <button class="flex size-[17px] items-center justify-center rounded-[3px] border border-[#44440f]" aria-label="Lock"><svg class="size-3" viewBox="0 0 12 12"><path d="M2 6H10V11H2Z" fill="#66660f"/><path d="M9 6V3Q7 0 5 3" fill="none" stroke="#66660f" stroke-width="1.700"/></svg></button>
                <button class="ml-auto h-[23px] w-[37px] rounded-[3px] border border-[#a5a510]">Reply</button>
              </div>
            </div>
          </div>
        </main>
        <!-- scroll bar -->
        <div class="flex w-4 shrink-0 flex-col items-center justify-between bg-[#f3f3f3] py-1">
          <div class="flex flex-col items-center gap-0.5"><svg class="size-2 rotate-180"><use href="#chev"/></svg><span class="h-[26px] w-1 rounded-full bg-[#858585]"></span></div>
          <svg class="size-2"><use href="#chev"/></svg>
        </div>
      </div>

      <!-- status bar -->
      <footer class="flex h-8 shrink-0 items-center bg-[#f3f3f3] pl-0.5 [&>*]:shrink-0">
        <svg class="h-6 w-[9px]"><use href="#grip"/></svg>
        <button class="ml-0.5 flex items-center gap-1"><svg class="size-6" viewBox="0 0 24 24"><use href="#gear" width="15" height="15" color="#888"/><use href="#gear" x="10" y="10" width="14" height="14" color="#ffa62b"/></svg>Options...<svg class="ml-0.5 size-2"><use href="#chev"/></svg></button>
        <svg class="ml-auto h-6 w-[9px]"><use href="#grip"/></svg>
        <button class="ml-[5px]" aria-label="First page"><svg class="size-[22px]" viewBox="0 0 22 22"><circle cx="11" cy="11" r="10.300" fill="none" stroke="#bbb"/><path d="M7.500 6V16M15 6 10 11 15 16" fill="none" stroke="#9ccbf4" stroke-width="2"/></svg></button>
        <button class="ml-1.5" aria-label="Previous page"><svg class="size-[22px]" viewBox="0 0 22 22"><circle cx="11" cy="11" r="10.300" fill="none" stroke="#bbb"/><path d="M13 6 8 11 13 16" fill="none" stroke="#9ccbf4" stroke-width="2"/></svg></button>
        <label class="ml-1 flex h-[22px] w-[90px] items-center rounded-xs border border-[#aaa] bg-white pr-0.5"><input class="w-full min-w-0 text-right focus:outline-none" value="1" aria-label="Page">/<sup class="-top-0.5 pl-0.5 text-[10px]">8</sup></label>
        <button class="ml-1" aria-label="Next page"><svg class="size-[22px]" viewBox="0 0 22 22"><circle cx="11" cy="11" r="10.300" fill="#fff" stroke="#888"/><path d="M9 6 14 11 9 16" fill="none" stroke="#3e9bf0" stroke-width="2.200"/></svg></button>
        <button class="ml-1.5" aria-label="Last page"><svg class="size-[22px]" viewBox="0 0 22 22"><circle cx="11" cy="11" r="10.300" fill="#fff" stroke="#888"/><path d="M7 6 12 11 7 16M15 6V16" fill="none" stroke="#3e9bf0" stroke-width="2.200"/></svg></button>
        <div class="ml-1 h-full w-px bg-[#bbb]"></div>
        <button class="ml-[5px]" aria-label="Previous view"><svg class="size-[22px]"><use href="#arrow"/></svg></button>
        <button class="ml-1.5 rotate-180 opacity-50" aria-label="Next view"><svg class="size-[22px]"><use href="#arrow"/></svg></button>
        <svg class="ml-1.5 h-6 w-[9px]"><use href="#grip"/></svg>
        <button class="ml-1.5" aria-label="Single page"><svg class="h-[22px] w-[18px]"><use href="#page"/></svg></button>
        <button class="ml-1 flex h-7 w-[27px] items-center justify-center border border-[#d0b87f] bg-[#e8d19b]" aria-label="Continuous"><svg class="size-6" viewBox="0 0 24 24"><path d="M5 1V10H20V1M5 23V14H15L20 19V23" fill="#fff" stroke="#777"/><path d="M14 14V20H20Z" fill="#555"/></svg></button>
        <button class="ml-0.5" aria-label="Two pages"><svg class="h-4 w-[25px]" viewBox="0 0 25 16"><use href="#page" width="12" height="16"/><use href="#page" x="13" width="12" height="16"/></svg></button>
        <button class="ml-1" aria-label="Two pages continuous"><svg class="h-[22px] w-[25px]" viewBox="0 0 25 22"><path d="M1 0V9H11V0M14 0V9H24V0M1 22V12H7L11 17V22M14 22V12H20L24 17V22" fill="#fff" stroke="#777"/><path d="M6 12V18H11ZM19 12V18H24Z" fill="#555"/></svg></button>
        <svg class="ml-1 h-6 w-[9px]"><use href="#grip"/></svg>
        <div class="relative ml-0.5"><select class="h-[22px] w-[82px] appearance-none rounded-xs border border-[#aaa] bg-white pl-[3px]" aria-label="Zoom"><option>33.3%</option><option>100%</option></select><svg class="pointer-events-none absolute top-[7px] right-1 size-2"><use href="#chev"/></svg></div>
        <div class="ml-0.5 h-full w-px bg-[#bbb]"></div>
        <button class="ml-[5px]" aria-label="Zoom out"><svg class="size-[22px]" viewBox="0 0 22 22"><circle cx="11" cy="11" r="10.300" fill="#fff" stroke="#888"/><path d="M5 11H17" stroke="#3e9bf0" stroke-width="1.700"/></svg></button>
        <input type="range" min="0" max="100" value="17" aria-label="Zoom level" class="ml-[5px] h-5 w-[99px] appearance-none bg-[linear-gradient(#888,#888)] bg-[size:1px_10px] bg-center bg-no-repeat [&::-webkit-slider-runnable-track]:h-0.5 [&::-webkit-slider-runnable-track]:bg-linear-to-r [&::-webkit-slider-runnable-track]:from-[#888] [&::-webkit-slider-runnable-track]:from-20% [&::-webkit-slider-runnable-track]:to-[#bbb] [&::-webkit-slider-runnable-track]:to-20% [&::-webkit-slider-thumb]:-mt-2 [&::-webkit-slider-thumb]:size-[18px] [&::-webkit-slider-thumb]:appearance-none [&::-webkit-slider-thumb]:rounded-full [&::-webkit-slider-thumb]:border [&::-webkit-slider-thumb]:border-[#666] [&::-webkit-slider-thumb]:bg-[radial-gradient(#888_3px,#fff_4px)]">
        <button class="ml-1.5" aria-label="Zoom in"><svg class="size-[22px]" viewBox="0 0 22 22"><circle cx="11" cy="11" r="10.300" fill="#fff" stroke="#888"/><path d="M5 11H17M11 5V17" stroke="#3e9bf0" stroke-width="1.700"/></svg></button>
        <svg class="ml-1.5 h-6 w-[9px]"><use href="#grip"/></svg>
        <button class="ml-1.5 opacity-60" aria-label="Layout"><svg class="h-3 w-4" viewBox="0 0 16 12"><path d="M.5.5H15.500V11.500H.5Z" fill="#fff" stroke="#888"/><path d="M4 3H12V10H4Z" fill="#3e9bf0"/><path d="M2 3V10M14 3V10" stroke="#888" stroke-dasharray="1 1"/></svg></button>
        <svg class="ml-2.5 size-2 text-[#888]"><use href="#chev"/></svg>
        <svg class="mr-0.5 ml-1 size-2 self-start" viewBox="0 0 8 8"><path d="M1 0 4 3 7 0M0 6.500H8" fill="none" stroke="#333" stroke-width="1.400"/></svg>
      </footer>
    </div>
  </div>
</div>

<script>
  // concrete fill of the round wall
  let seed = 7;
  function rnd() {
    seed = (seed * 16807) % 2147483647;
    return seed / 2147483647;
  }
  let dots = "";
  for (let i = 0; i < 1900; i++) {
    const a = Math.PI * (0.43 + rnd() * 0.63) + Math.PI / 24;
    const r = 288 + rnd() * 8.5;
    const x = 618 + r * Math.cos(a);
    const y = 525 - r * Math.sin(a);
    if (x > 618 || y > 582) continue;
    const s = rnd() < 0.25 ? 0.9 : 0.5;
    dots += `<circle cx="${x.toFixed(1)}" cy="${y.toFixed(1)}" r="${s}"/>`;
  }
  document.getElementById("stipple").innerHTML = dots;
</script>
</body>
</html>
